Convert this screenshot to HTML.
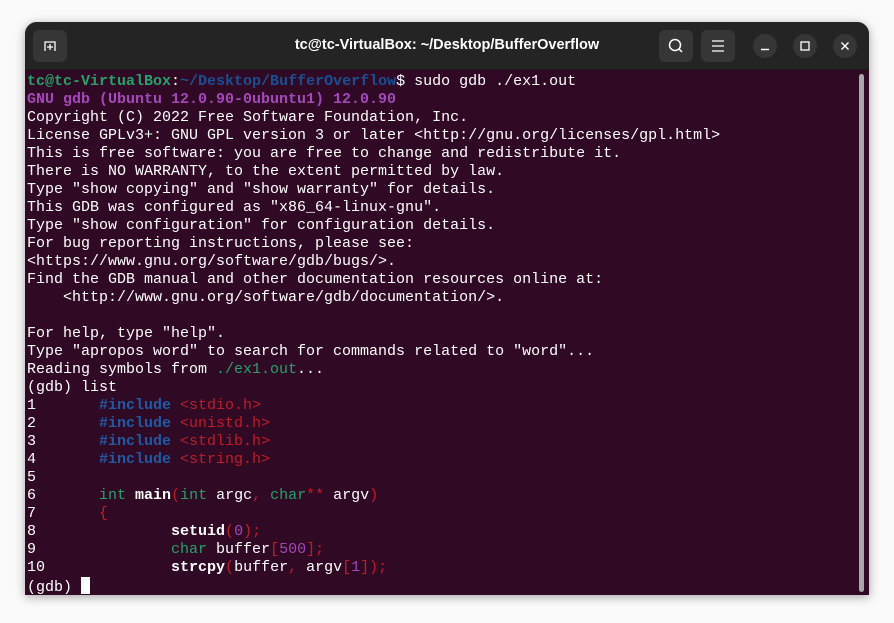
<!DOCTYPE html>
<html><head><meta charset="utf-8"><style>
*{margin:0;padding:0;box-sizing:border-box}
body{width:894px;height:623px;background:#fafafa;position:relative;overflow:hidden;font-family:"Liberation Sans",sans-serif}
.win{position:absolute;left:25px;top:22px;width:844px;height:573px;border-radius:12px 12px 0 0;overflow:hidden;background:#300a24;box-shadow:0 2px 10px rgba(0,0,0,.35)}
.tb{position:absolute;left:0;top:0;width:100%;height:48px;background:#242424;border-bottom:1px solid #1a1a1a}
.title{position:absolute;left:0;right:0;top:15px;text-align:center;color:#fff;font-weight:bold;font-size:14.5px}
.btn{position:absolute;top:8px;width:34px;height:32px;background:#363636;border-radius:6px}
.circ{position:absolute;top:12px;width:24px;height:24px;border-radius:50%;background:#363636}
.term{position:absolute;left:2px;top:51px;font-family:"Liberation Mono",monospace;font-size:15px;line-height:18px;color:#ffffff;white-space:pre}
.g{color:#26a269;font-weight:bold}.b{color:#1a4f94;font-weight:bold}.p{color:#a347ba;font-weight:bold}
.inc{color:#1f5aa6;font-weight:bold}.r{color:#c01c28}.t{color:#26a269}.n{color:#a347ba}.w{font-weight:bold}
.sb{position:absolute;left:834px;top:52px;width:5px;height:518px;background:#a8a8a8;border-radius:3px}
.cur{display:inline-block;width:9px;height:17px;background:#fff;vertical-align:-3px}
</style></head><body>
<div class="win">
<div class="tb">
<div class="btn" style="left:8px"><svg width="34" height="32"><path d="M12 21V12h10v9M17 14v6M14 17h6" stroke="#fff" stroke-width="1.3" fill="none"/></svg></div>
<div class="title">tc@tc-VirtualBox: ~/Desktop/BufferOverflow</div>
<div class="btn" style="left:634px"><svg width="34" height="32"><circle cx="16" cy="15" r="5.5" stroke="#fff" stroke-width="1.5" fill="none"/><path d="M20 19l3 3" stroke="#fff" stroke-width="1.5"/></svg></div>
<div class="btn" style="left:676px"><svg width="34" height="32"><path d="M11 11h12M11 16h12M11 21h12" stroke="#fff" stroke-width="1.3"/></svg></div>
<div class="circ" style="left:728px"><svg width="24" height="24"><path d="M8 15.5h8" stroke="#fff" stroke-width="1.4"/></svg></div>
<div class="circ" style="left:768px"><svg width="24" height="24"><rect x="8" y="8" width="8" height="8" stroke="#fff" stroke-width="1.3" fill="none"/></svg></div>
<div class="circ" style="left:808px"><svg width="24" height="24"><path d="M8.5 8.5l7 7M15.5 8.5l-7 7" stroke="#fff" stroke-width="1.4"/></svg></div>
</div>
<div class="sb"></div>
<div class="term"><span class="g">tc@tc-VirtualBox</span>:<span class="b">~/Desktop/BufferOverflow</span>$ sudo gdb ./ex1.out
<span class="p">GNU gdb (Ubuntu 12.0.90-0ubuntu1) 12.0.90</span>
Copyright (C) 2022 Free Software Foundation, Inc.
License GPLv3+: GNU GPL version 3 or later &lt;http://gnu.org/licenses/gpl.html&gt;
This is free software: you are free to change and redistribute it.
There is NO WARRANTY, to the extent permitted by law.
Type "show copying" and "show warranty" for details.
This GDB was configured as "x86_64-linux-gnu".
Type "show configuration" for configuration details.
For bug reporting instructions, please see:
&lt;https://www.gnu.org/software/gdb/bugs/&gt;.
Find the GDB manual and other documentation resources online at:
    &lt;http://www.gnu.org/software/gdb/documentation/&gt;.

For help, type "help".
Type "apropos word" to search for commands related to "word"...
Reading symbols from <span class="t">./ex1.out</span>...
(gdb) list
1       <span class="inc">#include</span> <span class="r">&lt;stdio.h&gt;</span>
2       <span class="inc">#include</span> <span class="r">&lt;unistd.h&gt;</span>
3       <span class="inc">#include</span> <span class="r">&lt;stdlib.h&gt;</span>
4       <span class="inc">#include</span> <span class="r">&lt;string.h&gt;</span>
5
6       <span class="t">int</span> <span class="w">main</span><span class="r">(</span><span class="t">int</span> argc<span class="r">,</span> <span class="t">char</span><span class="r">**</span> argv<span class="r">)</span>
7       <span class="r">{</span>
8               <span class="w">setuid</span><span class="r">(</span><span class="n">0</span><span class="r">);</span>
9               <span class="t">char</span> buffer<span class="r">[</span><span class="n">500</span><span class="r">];</span>
10              <span class="w">strcpy</span><span class="r">(</span>buffer<span class="r">,</span> argv<span class="r">[</span><span class="n">1</span><span class="r">]);</span>
(gdb) <span class="cur"></span></div>
</div>
</body></html>
